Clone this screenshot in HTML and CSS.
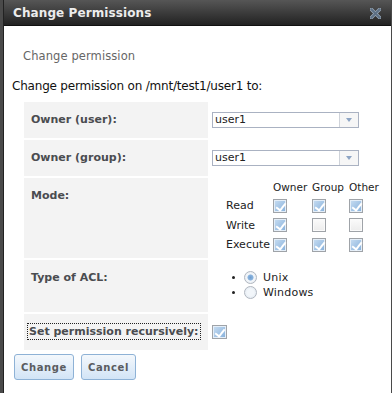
FILE: index.html
```html
<!DOCTYPE html>
<html lang="en">
<head>
  <meta charset="UTF-8" />
  <title>Change Permissions</title>
  <link rel="stylesheet" href="styles.css">
</head>
<body>
  <div class="dialog">
    <div class="titlebar">
      <span class="title">Change Permissions</span>
      <svg class="close" width="11" height="11" viewBox="0 0 11 11">
        <path d="M1.5 1.5 L9.5 9.5 M9.5 1.5 L1.5 9.5" stroke="#9aa9b8" stroke-width="3.4" stroke-linecap="square"/>
        <path d="M1.5 1.5 L9.5 9.5 M9.5 1.5 L1.5 9.5" stroke="#5d7085" stroke-width="2" stroke-linecap="square"/>
      </svg>
    </div>

    <div class="content">
      <h2 class="heading">Change permission</h2>
      <p class="intro">Change permission on /mnt/test1/user1 to:</p>

      <table class="form">
        <tr class="row-short">
          <th>Owner (user):</th>
          <td>
            <div class="select"><span class="select-value">user1</span><span class="select-arrow"></span></div>
          </td>
        </tr>
        <tr class="row-short">
          <th>Owner (group):</th>
          <td>
            <div class="select"><span class="select-value">user1</span><span class="select-arrow"></span></div>
          </td>
        </tr>
        <tr class="row-mode">
          <th>Mode:</th>
          <td>
            <div class="mode-grid">
              <span></span><span class="col-head">Owner</span><span class="col-head">Group</span><span class="col-head">Other</span>

              <span class="perm">Read</span>
              <span class="cb on"></span><span class="cb on"></span><span class="cb on"></span>

              <span class="perm">Write</span>
              <span class="cb on"></span><span class="cb"></span><span class="cb"></span>

              <span class="perm">Execute</span>
              <span class="cb on"></span><span class="cb on"></span><span class="cb on"></span>
            </div>
          </td>
        </tr>
        <tr class="row-acl">
          <th>Type of ACL:</th>
          <td>
            <ul class="radios">
              <li><span class="radio on"></span>Unix</li>
              <li><span class="radio"></span>Windows</li>
            </ul>
          </td>
        </tr>
        <tr class="row-short">
          <th><span class="focused">Set permission recursively:</span></th>
          <td class="cb-cell"><span class="cb on"></span></td>
        </tr>
      </table>

      <div class="actions">
        <button class="btn btn-change">Change</button>
        <button class="btn btn-cancel">Cancel</button>
      </div>
    </div>
  </div>
</body>
</html>
```

FILE: styles.css
```css
* {
  box-sizing: border-box;
}

body {
  margin: 0;
  background: #4a4a4a;
  font-family: "DejaVu Sans", "Noto Sans", sans-serif;
  overflow: hidden;
}

.dialog {
  margin-left: 3px;
  width: 388px;
  height: 393px;
  background: #fff;
  border-left: 1px solid #222;
}

/* title bar */
.titlebar {
  height: 26px;
  display: flex;
  align-items: center;
  justify-content: space-between;
  padding: 0 10px 0 9px;
  background: linear-gradient(#565656, #222);
  border-bottom: 1px solid #111;
}

.title {
  color: #ececec;
  font-size: 12px;
  font-weight: bold;
  letter-spacing: 0.1px;
}

.close {
  display: block;
  margin-top: 1px;
}

/* body */
.content {
  padding: 0 0 0 7px;
}

.heading {
  margin: 23px 0 0 12px;
  font-size: 11.5px;
  font-weight: normal;
  line-height: 14px;
  color: #666;
  letter-spacing: 0.1px;
}

.intro {
  margin: 16px 0 0 1px;
  font-size: 12px;
  line-height: 14px;
  color: #111;
  letter-spacing: -0.2px;
}

.form {
  margin: 7px 0 0 11px;
  border-spacing: 2px;
}

.form th {
  width: 184px;
  padding: 11px 7px 0;
  background: #f3f3f3;
  text-align: left;
  vertical-align: top;
  font-size: 11px;
  line-height: 13px;
  color: #4a4c50;
}

.form td {
  padding: 10px 0 0 2px;
  vertical-align: top;
}

.row-short th,
.row-short td {
  height: 36px;
}

.row-mode th,
.row-mode td {
  height: 80px;
}

.row-acl th,
.row-acl td {
  height: 52px;
}

/* select */
.select {
  display: flex;
  width: 147px;
  height: 16px;
  border: 1px solid #aab2c2;
  background: #fff;
}

.select-value {
  flex: 1;
  padding-left: 2px;
  font-size: 11px;
  line-height: 14px;
  color: #222;
}

.select-arrow {
  width: 19px;
  border-left: 1px solid #cfd3da;
  background: #f6f6f6;
  position: relative;
}

.select-arrow::after {
  content: '';
  position: absolute;
  left: 6px;
  top: 5px;
  border-left: 3.5px solid transparent;
  border-right: 3.5px solid transparent;
  border-top: 4px solid #8da4c4;
}

/* mode checkboxes */
.row-mode td {
  padding: 3px 0 0 16px;
}

.mode-grid {
  display: grid;
  grid-template-columns: 47px 39px 37px 30px;
  grid-template-rows: 15px repeat(3, 19.5px);
  align-items: center;
  font-size: 11px;
  color: #222;
}

.col-head {
  font-size: 10.5px;
  line-height: 13px;
  align-self: start;
}

.perm {
  line-height: 13px;
}

.cb {
  display: inline-block;
  width: 14px;
  height: 14px;
  border: 1px solid #9fa3a8;
  box-shadow: inset 0 0 0 1px #fafafa;
  background: linear-gradient(#fbfbfb, #ececec);
  position: relative;
}

.cb.on {
  box-shadow: inset 0 0 0 1px #e4eef8;
  background: linear-gradient(135deg, #c9def2, #84afdb);
}

.cb.on::after {
  content: '';
  position: absolute;
  left: 4px;
  top: 1px;
  width: 4px;
  height: 8px;
  border: solid #fff;
  border-width: 0 2px 2px 0;
  transform: rotate(38deg);
  filter: drop-shadow(0 0 0.5px #4d7fb3);
}

/* radios */
.row-acl td {
  padding: 10px 0 0 0;
}

.radios {
  margin: 0;
  padding: 0 0 0 22px;
  list-style: none;
  font-size: 11px;
  color: #222;
}

.radios li {
  display: flex;
  align-items: center;
  height: 15px;
  line-height: 13px;
  letter-spacing: 0.2px;
}

.radios li::before {
  content: '';
  width: 3px;
  height: 3px;
  border-radius: 50%;
  background: #222;
  margin-right: 9px;
}

.radio {
  width: 13px;
  height: 13px;
  border-radius: 50%;
  border: 1px solid #b0b6bf;
  background: radial-gradient(circle, #f2f6fa 40%, #dde5ee 100%);
  margin-right: 6px;
}

.radio.on {
  background: radial-gradient(circle, #6f9ed0 0, #8cb5df 34%, #f4f7fa 44%, #e1e8f0 100%);
}

/* recursive */
.focused {
  outline: 1px dotted #222;
  outline-offset: 1px;
  margin-left: -2px;
}

.cb-cell .cb {
  width: 15px;
}

/* buttons */
.actions {
  display: flex;
  gap: 7px;
  margin: 2px 0 0 3px;
}

.btn {
  height: 26px;
  border: 1px solid #8eb2d6;
  border-radius: 3px;
  background: linear-gradient(#f4f8fc, #d2e4f6);
  font-family: inherit;
  font-size: 10px;
  font-weight: bold;
  letter-spacing: 0.6px;
  color: #5a5c60;
  padding: 0;
}

.btn-change {
  width: 60px;
}

.btn-cancel {
  width: 55px;
}
```
